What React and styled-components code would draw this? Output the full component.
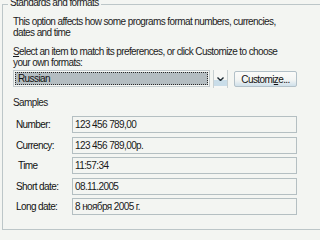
import React from "react";
import styled, { createGlobalStyle } from "styled-components";

const GlobalStyle = createGlobalStyle`
  html, body {
    margin: 0;
    padding: 0;
    background: #f3f5f2;
    overflow: hidden;
  }
  body {
    font-family: "Liberation Sans", Arial, sans-serif;
    font-size: 10px;
    letter-spacing: -0.6px;
    color: #1c1c1c;
  }
`;

const Group = styled.section`
  position: relative;
  box-sizing: border-box;
  margin: 4px 0 0 2px;
  width: 330px;
  height: 226px;
  border: 1px solid #bcc6c8;
  border-right: none;
  padding: 11px 0 0 10px;
`;

const Legend = styled.span`
  position: absolute;
  top: -8px;
  left: 5px;
  padding: 0 2px;
  line-height: 11px;
  background: #f3f5f2;
`;

const Text = styled.p`
  margin: ${(p) => p.$top || 0}px 0 0;
  line-height: 11px;
`;

const Key = styled.u`
  text-decoration: underline;
  text-underline-offset: 1px;
`;

const PickRow = styled.div`
  display: flex;
  align-items: flex-start;
  margin-top: 2px;
  height: 18px;
`;

const Select = styled.div`
  box-sizing: border-box;
  width: 197px;
  height: 17px;
  border: 1px solid #c3cbce;
  padding: 1px;
  display: flex;
`;

const SelectValue = styled.div`
  flex: 1;
  display: flex;
  align-items: center;
  border: 1px dotted #2a2a2a;
  background: #b4bdc1;
  padding-left: 2px;
  color: #111;
`;

const ArrowButton = styled.div`
  box-sizing: border-box;
  margin-left: 3px;
  width: 15px;
  height: 18px;
  border-left: 1px solid #c8d0d2;
  border-right: 1px solid #c8d0d2;
  background: linear-gradient(#f6f7f5 0, #f6f7f5 55%, #c9dde9 55%, #c9dde9 90%, #f6f7f5 90%);
  display: flex;
  justify-content: center;
  padding-top: 7px;
`;

const Button = styled.div`
  box-sizing: border-box;
  margin: 1px 0 0 6px;
  width: 63px;
  height: 16px;
  border: 1px solid #b2c0c8;
  border-radius: 2px;
  background: linear-gradient(#fbfbf9 0, #f3f5f4 55%, #cfe0ea 100%);
  display: flex;
  align-items: center;
  justify-content: center;
  color: #111;
`;

const Caption = styled.div`
  margin-top: 9px;
  line-height: 11px;
`;

const Samples = styled.div`
  margin-top: 8px;
  display: flex;
  flex-direction: column;
  gap: 3.5px;
`;

const Row = styled.div`
  display: flex;
  align-items: center;
  height: 17px;
`;

const Label = styled.div`
  box-sizing: border-box;
  width: 59px;
  padding-left: ${(p) => p.$indent || 3}px;
  color: #111;
  white-space: nowrap;
`;

const Value = styled.div`
  box-sizing: border-box;
  width: 225px;
  height: 17px;
  border: 1px solid #b4bfc2;
  display: flex;
  align-items: center;
  padding-left: 2px;
  color: #1a1a1a;
  white-space: nowrap;
`;

const samples = [
  { label: "Number:", value: "123 456 789,00" },
  { label: "Currency:", value: "123 456 789,00р." },
  { label: "Time", value: "11:57:34", indent: 5 },
  { label: "Short date:", value: "08.11.2005" },
  { label: "Long date:", value: "8 ноября 2005 г." },
];

export default function App() {
  return (
    <>
      <GlobalStyle />
      <Group>
        <Legend>Standards and formats</Legend>
        <Text $top={0}>
          This option affects how some programs format numbers, currencies,
          <br />
          dates and time
        </Text>
        <Text $top={8}>
          <Key>S</Key>elect an item to match its preferences, or click Customize to choose
          <br />
          your own formats:
        </Text>
        <PickRow>
          <Select>
            <SelectValue>Russian</SelectValue>
          </Select>
          <ArrowButton>
            <svg width="7" height="4" viewBox="0 0 7 4">
              <path d="M0.5 0.5 L3.5 3.5 L6.5 0.5" fill="none" stroke="#1e2a34" strokeWidth="1.4" />
            </svg>
          </ArrowButton>
          <Button>
            Customi<Key>z</Key>e...
          </Button>
        </PickRow>
        <Caption>Samples</Caption>
        <Samples>
          {samples.map((s) => (
            <Row key={s.label}>
              <Label $indent={s.indent}>{s.label}</Label>
              <Value>{s.value}</Value>
            </Row>
          ))}
        </Samples>
      </Group>
    </>
  );
}
